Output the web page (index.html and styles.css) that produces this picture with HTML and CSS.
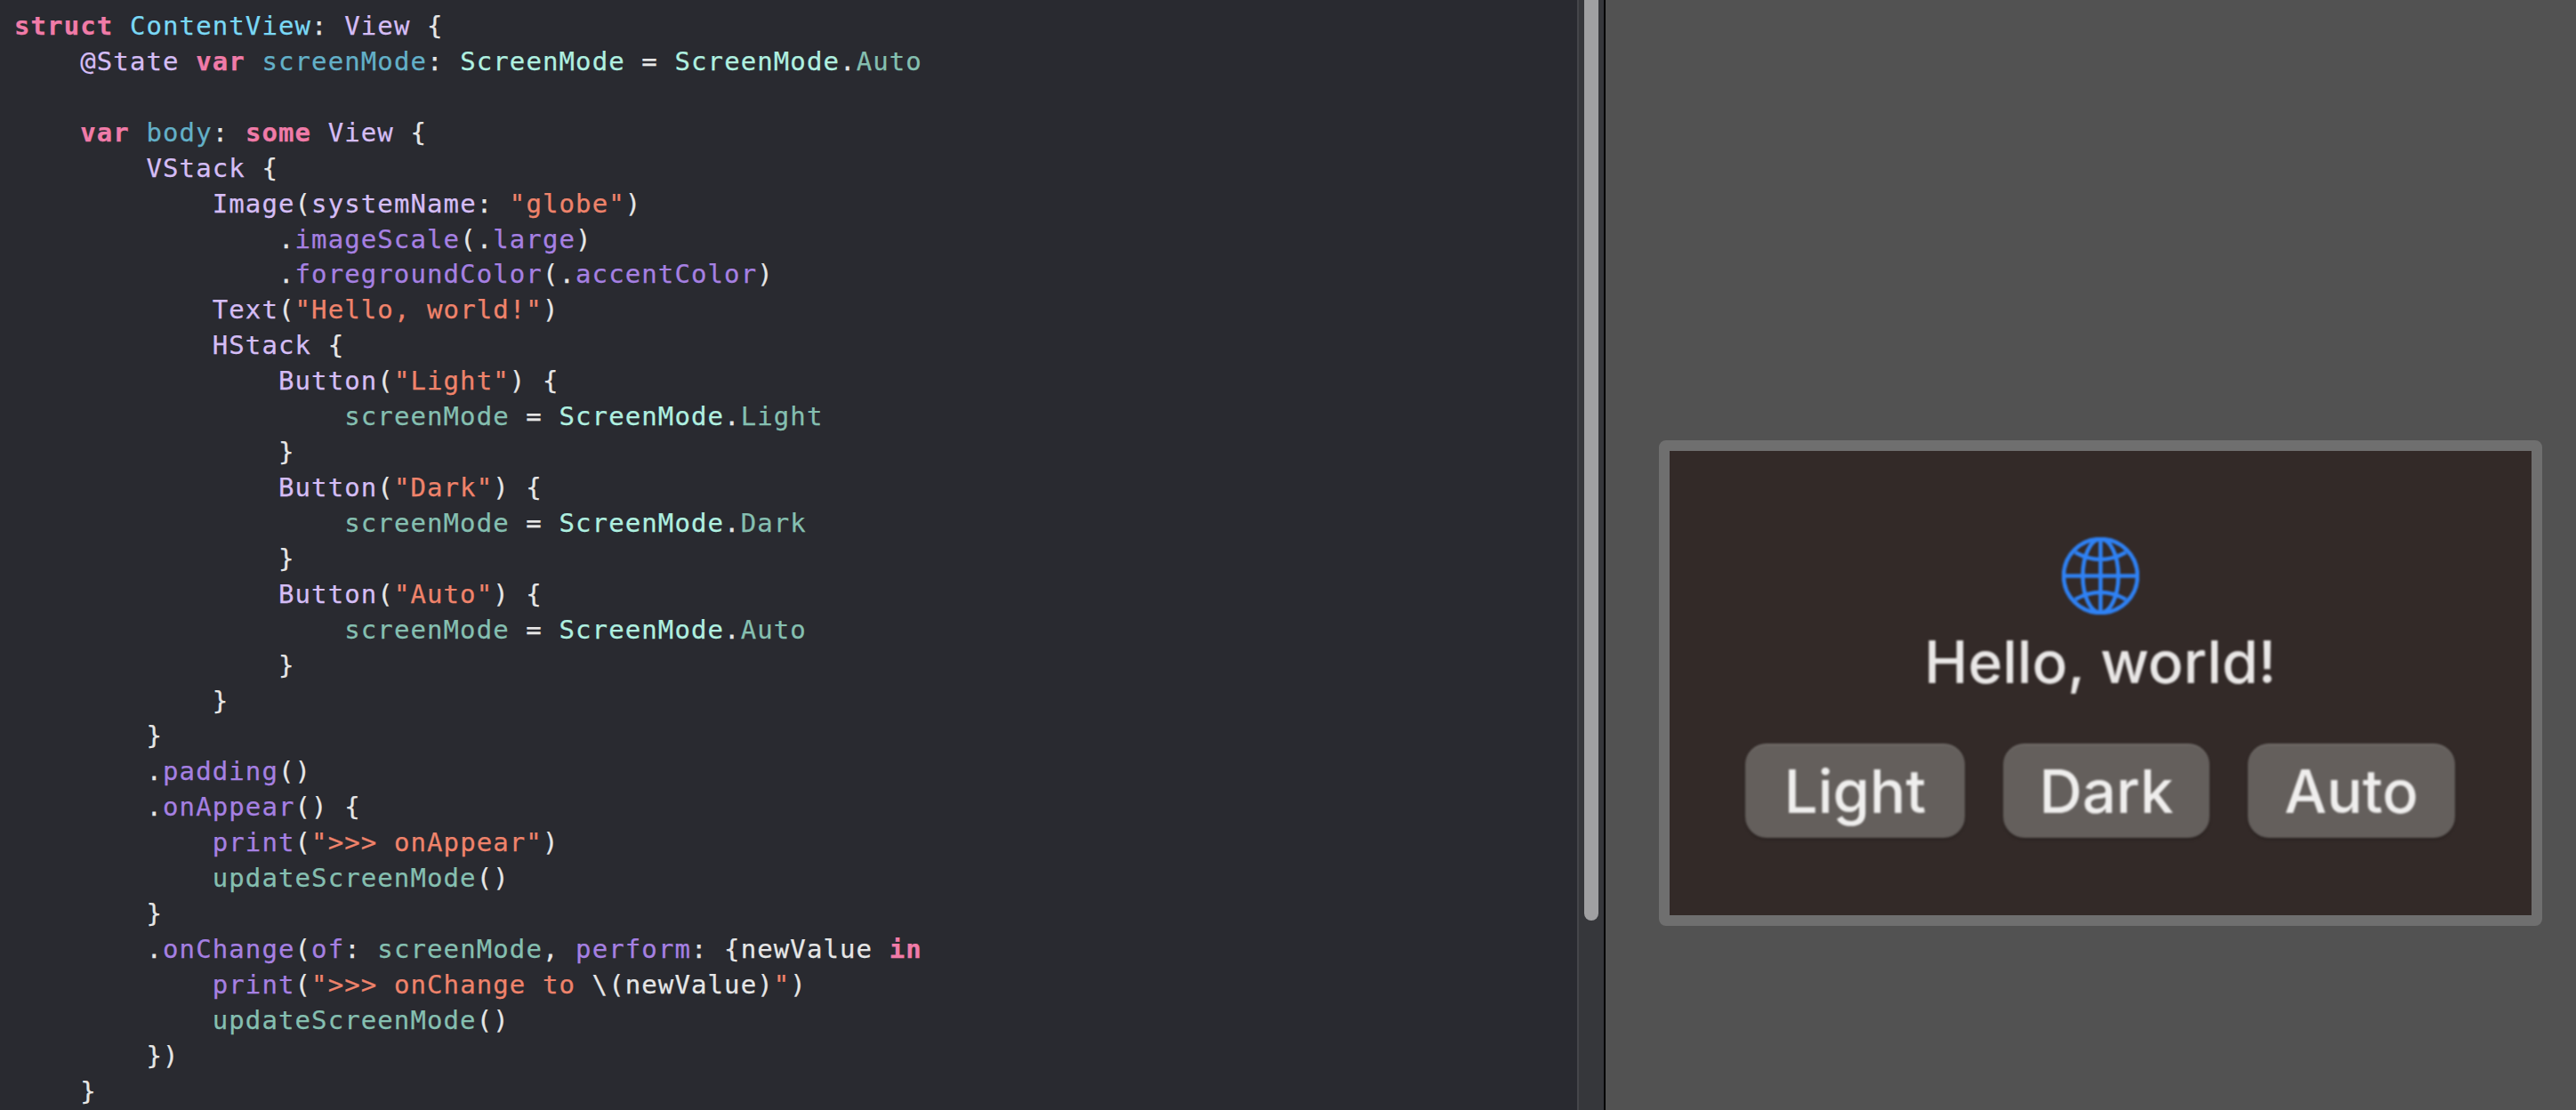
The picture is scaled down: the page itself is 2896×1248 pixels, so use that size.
FILE: index.html
```html
<!DOCTYPE html>
<html lang="en">
<head>
<meta charset="utf-8">
<title>ContentView</title>
<link rel="stylesheet" href="styles.css">
</head>
<body>
<main class="app">
<section class="editor">
<div class="code">
<div class="ln"><span class="k">struct</span> <span class="n">ContentView</span>: <span class="t">View</span> {</div>
<div class="ln">    <span class="t">@State</span> <span class="k">var</span> <span class="d">screenMode</span>: <span class="y">ScreenMode</span> = <span class="y">ScreenMode</span>.<span class="m">Auto</span></div>
<div class="ln"></div>
<div class="ln">    <span class="k">var</span> <span class="d">body</span>: <span class="k">some</span> <span class="t">View</span> {</div>
<div class="ln">        <span class="t">VStack</span> {</div>
<div class="ln">            <span class="t">Image</span>(<span class="t">systemName</span>: <span class="s">"globe"</span>)</div>
<div class="ln">                .<span class="p">imageScale</span>(.<span class="p">large</span>)</div>
<div class="ln">                .<span class="p">foregroundColor</span>(.<span class="p">accentColor</span>)</div>
<div class="ln">            <span class="t">Text</span>(<span class="s">"Hello, world!"</span>)</div>
<div class="ln">            <span class="t">HStack</span> {</div>
<div class="ln">                <span class="t">Button</span>(<span class="s">"Light"</span>) {</div>
<div class="ln">                    <span class="m">screenMode</span> = <span class="y">ScreenMode</span>.<span class="m">Light</span></div>
<div class="ln">                }</div>
<div class="ln">                <span class="t">Button</span>(<span class="s">"Dark"</span>) {</div>
<div class="ln">                    <span class="m">screenMode</span> = <span class="y">ScreenMode</span>.<span class="m">Dark</span></div>
<div class="ln">                }</div>
<div class="ln">                <span class="t">Button</span>(<span class="s">"Auto"</span>) {</div>
<div class="ln">                    <span class="m">screenMode</span> = <span class="y">ScreenMode</span>.<span class="m">Auto</span></div>
<div class="ln">                }</div>
<div class="ln">            }</div>
<div class="ln">        }</div>
<div class="ln">        .<span class="p">padding</span>()</div>
<div class="ln">        .<span class="p">onAppear</span>() {</div>
<div class="ln">            <span class="p">print</span>(<span class="s">"&gt;&gt;&gt; onAppear"</span>)</div>
<div class="ln">            <span class="m">updateScreenMode</span>()</div>
<div class="ln">        }</div>
<div class="ln">        .<span class="p">onChange</span>(<span class="p">of</span>: <span class="m">screenMode</span>, <span class="p">perform</span>: {newValue <span class="k">in</span></div>
<div class="ln">            <span class="p">print</span>(<span class="s">"&gt;&gt;&gt; onChange to </span>\(newValue)<span class="s">"</span>)</div>
<div class="ln">            <span class="m">updateScreenMode</span>()</div>
<div class="ln">        })</div>
<div class="ln">    }</div>
</div>
</section>
<aside class="gutter"><div class="thumb"></div></aside>
<section class="canvas">
<div class="preview">
<div class="content">
<svg class="globe" viewBox="0 0 87 87" aria-hidden="true">
<circle cx="43.5" cy="43.5" r="41.5"/>
<ellipse cx="43.5" cy="43.5" rx="20" ry="41.5"/>
<path d="M43.5 2V85M2 43.5H85M15 17Q43.5 33 72 17M15 70Q43.5 54 72 70"/>
</svg>
<p class="hello">Hello, world!</p>
<div class="buttons">
<button class="btn btn-light">Light</button>
<button class="btn btn-dark">Dark</button>
<button class="btn btn-auto">Auto</button>
</div>
</div>
</div>
</section>
</main>
</body>
</html>
```
FILE: styles.css
```css
html, body { margin: 0; padding: 0; height: 100%; overflow: hidden; background: #525252; }
.app { display: flex; width: 2896px; height: 1248px; }
.editor { width: 1773px; flex: none; background: #292a30; overflow: hidden; padding: 10px 0 0 16px; box-sizing: border-box; }
.code { font-family: "DejaVu Sans Mono", monospace; font-size: 29px; letter-spacing: 1.1px; line-height: 39.93px; color: #e6e6e6; -webkit-text-stroke: 0.25px currentColor; }
.ln { height: 39.93px; white-space: pre; }
.k { color: #f07ba8; font-weight: 700; }
.n { color: #7ad8f5; }
.t { color: #d5bdf5; }
.d { color: #63b0c8; }
.y { color: #b0f0e0; }
.m { color: #85bfb0; }
.p { color: #a680e2; }
.s { color: #ef836b; }
.gutter { width: 32px; flex: none; background: #36373b; border-left: 2px solid #45464b; border-right: 2px solid #000; box-sizing: border-box; padding-left: 6px; }
.thumb { width: 16px; height: 1035px; background: #a0a0a2; border-radius: 0 0 8px 8px; }
.canvas { flex: 1; background: #525252; padding: 495px 0 0 60px; box-sizing: border-box; }
.preview { width: 993px; height: 546px; box-sizing: border-box; border: 12px solid #6f6f6f; border-radius: 8px; background: #332a28; }
.content { display: flex; flex-direction: column; align-items: center; padding: 97px 1px 0 0; filter: blur(1px); }
.globe { width: 87px; height: 87px; fill: none; stroke: #2f82f5; stroke-width: 4.5; }
.hello { margin: 7px 0 0; font-family: "Inter", sans-serif; font-weight: 500; font-size: 66px; line-height: 92px; color: #e9e7e6; }
.buttons { display: flex; gap: 43px; margin-top: 46px; }
.btn { height: 106px; border: 0; border-radius: 24px; background: #645f5c; box-shadow: 0 2px 3px rgba(0,0,0,.25), inset 0 2px 0 rgba(255,255,255,.08); color: #efeeed; font-family: "Inter", sans-serif; font-weight: 500; font-size: 67px; padding: 0; }
.btn-light { width: 247px; }
.btn-dark { width: 232px; }
.btn-auto { width: 233px; }
```
